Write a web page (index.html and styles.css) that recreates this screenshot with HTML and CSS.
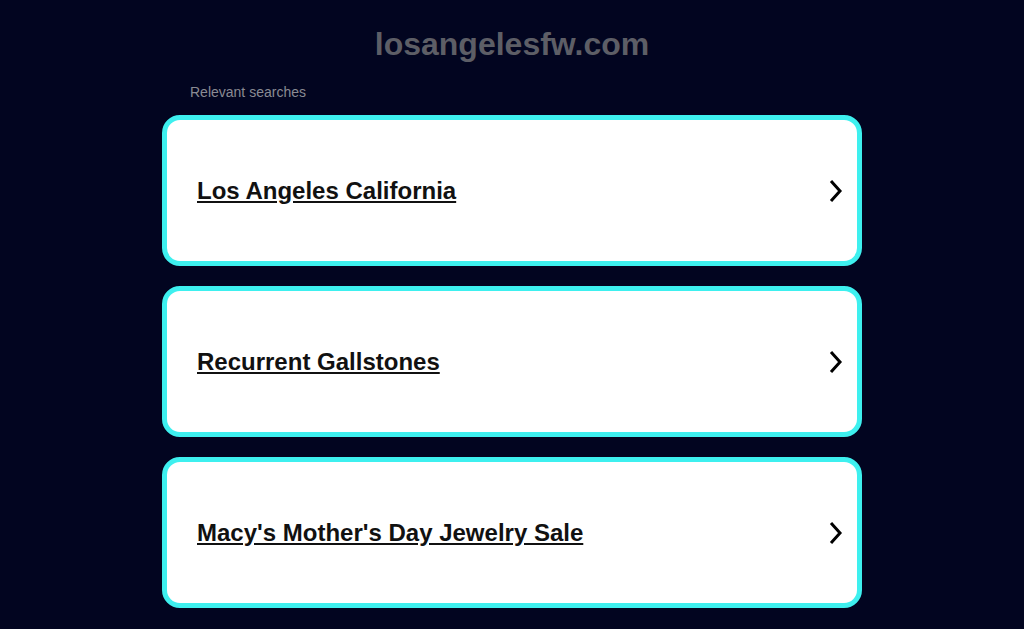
FILE: index.html
```html
<!DOCTYPE html>
<html>
<head>
<meta charset="utf-8">
<link rel="stylesheet" href="styles.css">
</head>
<body>
<div class="page">
  <h1 class="domain">losangelesfw.com</h1>
  <div class="rs">Relevant searches</div>
  <div class="list">
    <a class="card" href="#"><span class="label">Los Angeles California</span><svg class="chev" width="15" height="24" viewBox="0 0 15 24"><path d="M3 2 L12 12 L3 22" fill="none" stroke="#000" stroke-width="3"/></svg></a>
    <a class="card" href="#"><span class="label">Recurrent Gallstones</span><svg class="chev" width="15" height="24" viewBox="0 0 15 24"><path d="M3 2 L12 12 L3 22" fill="none" stroke="#000" stroke-width="3"/></svg></a>
    <a class="card" href="#"><span class="label">Macy's Mother's Day Jewelry Sale</span><svg class="chev" width="15" height="24" viewBox="0 0 15 24"><path d="M3 2 L12 12 L3 22" fill="none" stroke="#000" stroke-width="3"/></svg></a>
  </div>
</div>
</body>
</html>
```
FILE: styles.css
```css
html, body {
  margin: 0;
  padding: 0;
  background: #020520;
  font-family: "Liberation Sans", Arial, sans-serif;
}
.page {
  width: 700px;
  margin: 0 auto;
  padding-top: 26px;
}
.domain {
  margin: 0;
  text-align: center;
  font-size: 32px;
  line-height: 36px;
  font-weight: bold;
  color: #5d5e66;
}
.rs {
  margin: 22px 0 0 28px;
  font-size: 14px;
  line-height: 16px;
  color: #8a8b93;
}
.list {
  margin-top: 15px;
  display: flex;
  flex-direction: column;
  gap: 20px;
}
.card {
  box-sizing: border-box;
  height: 151px;
  border: 5px solid #3ef0ef;
  border-radius: 18px;
  background: #fff;
  display: flex;
  align-items: center;
  justify-content: space-between;
  padding: 0 14px 0 30px;
  text-decoration: none;
  color: #000;
}
.label {
  font-size: 24px;
  font-weight: bold;
  text-decoration: underline;
  color: #111;
}
.chev { display: block; }
```
